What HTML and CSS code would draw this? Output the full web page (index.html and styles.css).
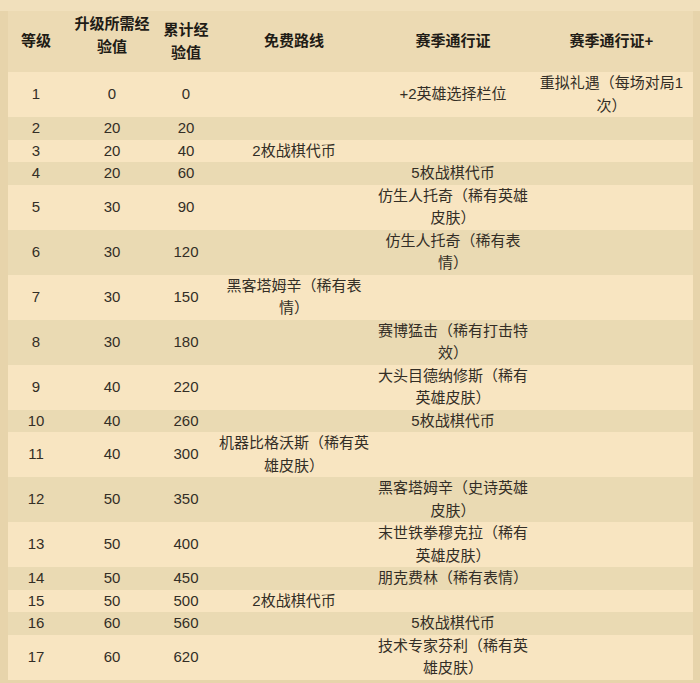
FILE: index.html
```html
<!DOCTYPE html>
<html lang="zh-CN">
<head>
<meta charset="utf-8">
<title>等级奖励</title>
<link rel="stylesheet" href="styles.css">
</head>
<body>
<div class="page">
<table class="levels">
<colgroup>
<col class="w1"><col class="w2"><col class="w3"><col class="w4"><col class="w5"><col class="w6">
</colgroup>
<thead>
<tr class="head">
<th>等级</th>
<th class="h2">升级所需经验值</th>
<th>累计经验值</th>
<th>免费路线</th>
<th>赛季通行证</th>
<th>赛季通行证+</th>
</tr>
</thead>
<tbody>
<tr class="two"><td>1</td><td>0</td><td>0</td><td class="free"></td><td>+2英雄选择栏位</td><td>重拟礼遇（每场对局1次）</td></tr>
<tr><td>2</td><td>20</td><td>20</td><td class="free"></td><td></td><td></td></tr>
<tr><td>3</td><td>20</td><td>40</td><td class="free">2枚战棋代币</td><td></td><td></td></tr>
<tr><td>4</td><td>20</td><td>60</td><td class="free"></td><td>5枚战棋代币</td><td></td></tr>
<tr class="two"><td>5</td><td>30</td><td>90</td><td class="free"></td><td>仿生人托奇（稀有英雄皮肤）</td><td></td></tr>
<tr class="two"><td>6</td><td>30</td><td>120</td><td class="free"></td><td>仿生人托奇（稀有表情）</td><td></td></tr>
<tr class="two"><td>7</td><td>30</td><td>150</td><td class="free">黑客塔姆辛（稀有表情）</td><td></td><td></td></tr>
<tr class="two"><td>8</td><td>30</td><td>180</td><td class="free"></td><td>赛博猛击（稀有打击特效）</td><td></td></tr>
<tr class="two"><td>9</td><td>40</td><td>220</td><td class="free"></td><td>大头目德纳修斯（稀有英雄皮肤）</td><td></td></tr>
<tr><td>10</td><td>40</td><td>260</td><td class="free"></td><td>5枚战棋代币</td><td></td></tr>
<tr class="two"><td>11</td><td>40</td><td>300</td><td class="free">机器比格沃斯（稀有英雄皮肤）</td><td></td><td></td></tr>
<tr class="two"><td>12</td><td>50</td><td>350</td><td class="free"></td><td>黑客塔姆辛（史诗英雄皮肤）</td><td></td></tr>
<tr class="two"><td>13</td><td>50</td><td>400</td><td class="free"></td><td>末世铁拳穆克拉（稀有英雄皮肤）</td><td></td></tr>
<tr><td>14</td><td>50</td><td>450</td><td class="free"></td><td>朋克费林（稀有表情）</td><td></td></tr>
<tr><td>15</td><td>50</td><td>500</td><td class="free">2枚战棋代币</td><td></td><td></td></tr>
<tr><td>16</td><td>60</td><td>560</td><td class="free"></td><td>5枚战棋代币</td><td></td></tr>
<tr class="two"><td>17</td><td>60</td><td>620</td><td class="free"></td><td>技术专家芬利（稀有英雄皮肤）</td><td></td></tr>
</tbody>
</table>
</div>
</body>
</html>
```

FILE: styles.css
```css
html, body {
  margin: 0;
  padding: 0;
}
body {
  background: linear-gradient(to bottom, #f1e0bc 0, #f1e0bc 11px, #e7d4ab 11px, #e7d4ab 100%);
  min-height: 683px;
  font-family: "Liberation Sans", "Noto Sans CJK SC", sans-serif;
  font-size: 15px;
  color: #332e26;
}
.page {
  padding: 11px 7px 0 8px;
}
.levels {
  border-collapse: collapse;
  table-layout: fixed;
  width: 685px;
}
.w1 { width: 56px; }
.w2 { width: 96px; }
.w3 { width: 52px; }
.w4 { width: 164px; }
.w5 { width: 154px; }
.w6 { width: 163px; }
.levels th,
.levels td {
  padding: 0 1px;
  text-align: center;
  vertical-align: middle;
  line-height: 22.5px;
}
.levels td.free {
  padding: 0 6px;
}
.head {
  background: #ecdab3;
  height: 61px;
}
.levels th {
  font-weight: bold;
  color: #1f1c16;
}
.levels th.h2 {
  padding: 2px 8px 0;
  vertical-align: top;
}
.levels tbody tr {
  height: 22.5px;
}
.levels tbody tr.two {
  height: 45px;
}
.levels tbody tr:nth-child(odd) {
  background: #f8e5c1;
}
.levels tbody tr:nth-child(even) {
  background: #eadab3;
}
```
